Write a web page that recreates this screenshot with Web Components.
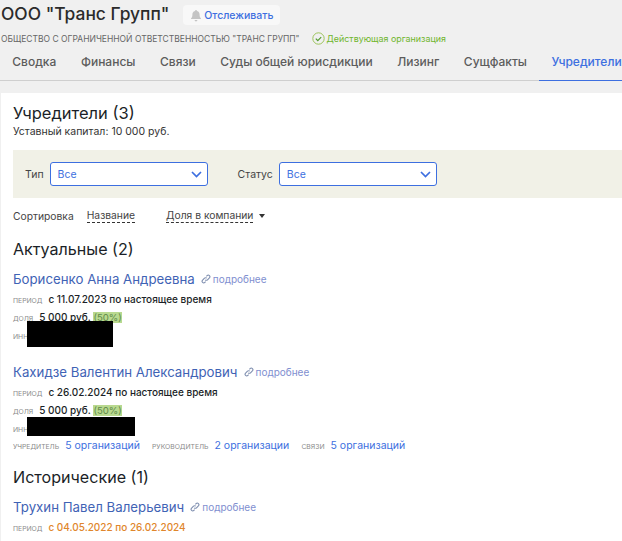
<!DOCTYPE html>
<html lang="ru">
<head>
<meta charset="utf-8">
<title>ООО "Транс Групп"</title>
<style>
  html, body { margin: 0; height: 541px; overflow: hidden; background: #f0f0f0; }
  body { font-family: Inter, "Noto Sans", sans-serif; color: #1b1f27; }
</style>
</head>
<body>
<company-header></company-header>
<company-tabs></company-tabs>
<founders-page></founders-page>

<script>
const LINK = "#3d6fe0";

class CompanyHeader extends HTMLElement {
  connectedCallback() {
    this.attachShadow({ mode: "open" }).innerHTML = /* html */`
    <style>
      :host { display: block; height: 47px; padding-left: 1px; }
      .top { display: flex; align-items: center; height: 26px; }
      h1 { margin: 0; font-size: 17.4px; font-weight: 500; color: #2b2b2b; white-space: nowrap; }
      .watch { display: flex; align-items: center; gap: 2px; height: 20px; margin: 4px 0 0 14px; padding: 0 7px; background: #f8f8f8; border-radius: 4px; font-size: 10.5px; font-weight: 500; color: ${LINK}; white-space: nowrap; }
      .sub { display: flex; align-items: center; height: 17px; margin-top: 4px; font-size: 8.5px; color: #666; white-space: nowrap; }
      .status { display: flex; align-items: center; gap: 2px; margin-left: 12px; font-size: 8.9px; color: #6fb52c; }
    </style>
    <div class="top">
      <h1>ООО "Транс Групп"</h1>
      <div class="watch">
        <svg width="12" height="13" viewBox="0 0 12 13"><path d="M6 1a1 1 0 0 1 1 1c2 .5 2.6 2 2.6 3.8 0 2 .5 3 1.4 3.7v.5H1v-.5c.9-.7 1.4-1.7 1.4-3.7C2.4 4 3 2.5 5 2a1 1 0 0 1 1-1zM4.6 11h2.8a1.4 1.4 0 0 1-2.8 0z" fill="#c4c4c4"/></svg>
        Отслеживать
      </div>
    </div>
    <div class="sub">
      ОБЩЕСТВО С ОГРАНИЧЕННОЙ ОТВЕТСТВЕННОСТЬЮ "ТРАНС ГРУПП"
      <span class="status">
        <svg width="13" height="13" viewBox="0 0 13 13" fill="none"><circle cx="6.5" cy="6.5" r="5.7" stroke="#9cc45a"/><path d="M3.8 6.6l2 2 3.4-3.4" stroke="#4f9a2d" stroke-width="1.2"/></svg>
        Действующая организация
      </span>
    </div>`;
  }
}

class CompanyTabs extends HTMLElement {
  connectedCallback() {
    const names = ["Сводка", "Финансы", "Связи", "Суды общей юрисдикции", "Лизинг", "Сущфакты", "Учредители"];
    this.attachShadow({ mode: "open" }).innerHTML = /* html */`
    <style>
      :host { display: block; height: 33px; border-bottom: 1px solid #cfcfcf; }
      nav { display: flex; }
      a { display: block; height: 34px; box-sizing: border-box; padding: 7px 12.3px 0; font-size: 12px; line-height: 16px; font-weight: 500; color: #5c5c5c; white-space: nowrap; }
      a.on { flex: 1; padding-right: 0; color: ${LINK}; border-bottom: 1px solid ${LINK}; }
    </style>
    <nav>${names.map((n, i) => `<a class="${i == 6 ? "on" : ""}">${n}</a>`).join("")}</nav>`;
  }
}

class FilterSelect extends HTMLElement {
  connectedCallback() {
    this.attachShadow({ mode: "open" }).innerHTML = /* html */`
    <style>
      :host { display: flex; align-items: center; gap: 6px; font-size: 10.5px; color: #444; }
      .box { display: flex; align-items: center; justify-content: space-between; box-sizing: border-box; width: 158px; height: 24px; padding: 0 5px 0 7px; background: #fff; border: 1px solid ${LINK}; border-radius: 3px; color: ${LINK}; }
    </style>
    <span>${this.getAttribute("label")}</span>
    <div class="box">
      Все
      <svg width="11" height="7" viewBox="0 0 11 7" fill="none"><path d="M1 1l4.5 4.5L10 1" stroke="${LINK}" stroke-width="1.7"/></svg>
    </div>`;
  }
}

class SortBar extends HTMLElement {
  connectedCallback() {
    this.attachShadow({ mode: "open" }).innerHTML = /* html */`
    <style>
      :host { display: flex; align-items: center; height: 20px; margin-top: 8px; font-size: 10.3px; color: #444; }
      u { text-decoration: none; border-bottom: 1px dashed #333; line-height: 13px; }
      .a { margin-left: 13px; }
      .b { margin-left: 31px; }
      i { width: 0; height: 0; margin-left: 6px; border: 3px solid transparent; border-top: 4px solid #333; border-bottom: 0; }
    </style>
    <span>Сортировка</span><u class="a">Название</u><u class="b">Доля в компании</u><i></i>`;
  }
}

class FounderCard extends HTMLElement {
  connectedCallback() {
    this.attachShadow({ mode: "open" }).innerHTML = /* html */`
    <style>
      :host { display: block; color: #1b1f27; }
      .name { display: flex; align-items: center; height: 20px; margin-bottom: 1px; font-size: 13.25px; color: #3f63b5; white-space: nowrap; }
      .more { display: flex; align-items: center; gap: 2px; margin-left: 6px; font-size: 10px; color: #7f8fd0; }
    </style>
    <div class="name">${this.getAttribute("name")}
      <span class="more">
        <svg width="10" height="10" viewBox="0 0 10 10" fill="none" stroke="#7f8fb0" stroke-width="1.1"><path d="M4.2 5.8a1.6 1.6 0 0 0 2.3 0l1.9-1.9a1.6 1.6 0 0 0-2.3-2.3l-.7.7"/><path d="M5.8 4.2a1.6 1.6 0 0 0-2.3 0L1.6 6.1a1.6 1.6 0 0 0 2.3 2.3l.7-.7"/></svg>
        подробнее
      </span>
    </div>
    <slot></slot>`;
  }
}

class FoundersPage extends HTMLElement {
  connectedCallback() {
    const key = (t) => `<span class="key">${t}</span>`;
    this.attachShadow({ mode: "open" }).innerHTML = /* html */`
    <style>
      :host { display: block; height: 460px; margin: 12px 0 0 1px; padding-left: 12px; background: #fff; overflow: hidden; }
      h2 { margin: 0; font-size: 16.1px; line-height: 20px; font-weight: 400; color: #1b1f27; }
      h2.top { padding-top: 10px; font-size: 16.5px; }
      .cap { height: 15px; margin-top: 1px; font-size: 10.5px; line-height: 15px; color: #333; }
      .filters { display: flex; gap: 30px; align-items: center; height: 48px; margin-top: 11px; padding-left: 12px; background: #f1f1e7; }
      .sec { margin-top: 13px; }
      .row { height: 18px; line-height: 18px; font-size: 10px; font-weight: 500; white-space: nowrap; }
      .key { margin-right: 6px; font-size: 6.8px; font-weight: 400; color: #8a8a8a; text-transform: uppercase; }
      .share { background: #b9d98f; color: #5f8a4a; font-size: 9.6px; font-weight: 400; }
      .inn { position: relative; }
      .mask { position: absolute; left: 14px; background: #000; }
      .old { color: #e0862c; }
      .links { height: 17px; line-height: 17px; }
      .lnk { font-size: 10.5px; font-weight: 400; color: ${LINK}; margin-right: 9.5px; }
      founder-card { margin-top: 10px; }
      founder-card.next { margin-top: 18px; }
    </style>
    <h2 class="top">Учредители (3)</h2>
    <div class="cap">Уставный капитал: 10 000 руб.</div>
    <div class="filters">
      <filter-select label="Тип"></filter-select>
      <filter-select label="Статус"></filter-select>
    </div>
    <sort-bar></sort-bar>
    <h2 class="sec">Актуальные (2)</h2>
    <founder-card name="Борисенко Анна Андреевна">
      <div class="row">${key("период")}с 11.07.2023 по настоящее время</div>
      <div class="row">${key("доля")}5 000 руб. <span class="share">(50%)</span></div>
      <div class="row inn">${key("инн")}<span class="mask" style="top:-5px;width:86px;height:26px"></span></div>
    </founder-card>
    <founder-card class="next" name="Кахидзе Валентин Александрович">
      <div class="row">${key("период")}с 26.02.2024 по настоящее время</div>
      <div class="row">${key("доля")}5 000 руб. <span class="share">(50%)</span></div>
      <div class="row inn">${key("инн")}<span class="mask" style="top:-2px;width:108px;height:19px"></span></div>
      <div class="row links">${key("учредитель")}<span class="lnk">5 организаций</span> ${key("руководитель")}<span class="lnk">2 организации</span> ${key("связи")}<span class="lnk">5 организаций</span></div>
    </founder-card>
    <h2 class="sec">Исторические (1)</h2>
    <founder-card name="Трухин Павел Валерьевич">
      <div class="row">${key("период")}<span class="old">с 04.05.2022 по 26.02.2024</span></div>
    </founder-card>`;
  }
}

customElements.define("company-header", CompanyHeader);
customElements.define("company-tabs", CompanyTabs);
customElements.define("filter-select", FilterSelect);
customElements.define("sort-bar", SortBar);
customElements.define("founder-card", FounderCard);
customElements.define("founders-page", FoundersPage);
</script>
</body>
</html>
